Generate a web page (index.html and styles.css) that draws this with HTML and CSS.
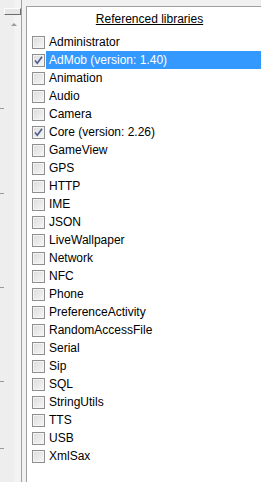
FILE: index.html
```html
<!DOCTYPE html>
<html lang="en">
<head>
    <meta charset="UTF-8">
    <meta name="viewport" content="width=device-width, initial-scale=1.0">
    <title>Referenced libraries</title>
    <link rel="stylesheet" href="styles.css">
</head>
<body>

    <div class="frame">
        <div class="rail">
            <div class="rail-button"></div>
            <div class="rail-arrow"></div>
            <div class="tick tick-1"></div>
            <div class="tick tick-2"></div>
            <div class="tick tick-3"></div>
            <div class="tick tick-4"></div>
            <div class="tick tick-5"></div>
        </div>
        <div class="gutter"></div>

        <div class="panel">
            <h1 class="panel-title">Referenced libraries</h1>

            <ul class="lib-list">
                <li class="lib"><span class="box"></span><span class="name">Administrator</span></li>
                <li class="lib selected">
                    <span class="box"><svg class="check" viewBox="0 0 11 11"><polyline points="2,5.5 4.3,8.2 9,1.8"/></svg></span>
                    <span class="name">AdMob (version: 1.40)</span>
                </li>
                <li class="lib"><span class="box"></span><span class="name">Animation</span></li>
                <li class="lib"><span class="box"></span><span class="name">Audio</span></li>
                <li class="lib"><span class="box"></span><span class="name">Camera</span></li>
                <li class="lib">
                    <span class="box"><svg class="check" viewBox="0 0 11 11"><polyline points="2,5.5 4.3,8.2 9,1.8"/></svg></span>
                    <span class="name">Core (version: 2.26)</span>
                </li>
                <li class="lib"><span class="box"></span><span class="name">GameView</span></li>
                <li class="lib"><span class="box"></span><span class="name">GPS</span></li>
                <li class="lib"><span class="box"></span><span class="name">HTTP</span></li>
                <li class="lib"><span class="box"></span><span class="name">IME</span></li>
                <li class="lib"><span class="box"></span><span class="name">JSON</span></li>
                <li class="lib"><span class="box"></span><span class="name">LiveWallpaper</span></li>
                <li class="lib"><span class="box"></span><span class="name">Network</span></li>
                <li class="lib"><span class="box"></span><span class="name">NFC</span></li>
                <li class="lib"><span class="box"></span><span class="name">Phone</span></li>
                <li class="lib"><span class="box"></span><span class="name">PreferenceActivity</span></li>
                <li class="lib"><span class="box"></span><span class="name">RandomAccessFile</span></li>
                <li class="lib"><span class="box"></span><span class="name">Serial</span></li>
                <li class="lib"><span class="box"></span><span class="name">Sip</span></li>
                <li class="lib"><span class="box"></span><span class="name">SQL</span></li>
                <li class="lib"><span class="box"></span><span class="name">StringUtils</span></li>
                <li class="lib"><span class="box"></span><span class="name">TTS</span></li>
                <li class="lib"><span class="box"></span><span class="name">USB</span></li>
                <li class="lib"><span class="box"></span><span class="name">XmlSax</span></li>
            </ul>
        </div>
    </div>

</body>
</html>
```

FILE: styles.css
```css
body {
    margin: 0;
    width: 261px;
    height: 482px;
    overflow: hidden;
    background-color: #f0f0f0;
    font-family: 'Liberation Sans', Arial, sans-serif;
    font-size: 12px;
    color: #000;
}

.frame {
    display: flex;
    height: 482px;
}

/* left strip, a scrollbar from the neighbouring pane */
.rail {
    width: 21px;
    flex-shrink: 0;
    background: linear-gradient(to right, #eeeeee 0, #eeeeee 14px, #f3f3f3 14px, #f3f3f3 21px);
    border-right: 1px solid #a0a0a0;
    display: flex;
    flex-direction: column;
}

.rail-button {
    margin: 8px 0 0 4px;
    height: 5px;
    border: 1px solid #fcfcfc;
    border-right-color: #6d6d6d;
    border-bottom-color: #6d6d6d;
    background-color: #e6e6e6;
}

.rail-arrow {
    margin: 8px 0 0 11px;
    width: 0;
    height: 0;
    border-left: 3px solid transparent;
    border-right: 3px solid transparent;
    border-bottom: 3px solid #9a9a9a;
}

.tick {
    width: 4px;
    height: 1px;
    background-color: #9a9a9a;
}

.tick-1 { margin-top: 82px; }
.tick-2 { margin-top: 84px; }
.tick-3 { margin-top: 93px; }
.tick-4 { margin-top: 93px; }
.tick-5 { margin-top: 66px; }

.gutter {
    width: 4px;
    flex-shrink: 0;
    background-color: #f0f0f0;
}

.panel {
    width: 245px;
    flex-shrink: 0;
    margin-top: 6px;
    background-color: #fff;
    border-top: 1px solid #a0a0a0;
    border-left: 1px solid #a0a0a0;
}

.panel-title {
    margin: 3px 0 5px 0;
    font-size: 12px;
    font-weight: normal;
    line-height: 18px;
    text-align: center;
    text-decoration: underline;
}

.lib-list {
    list-style: none;
    margin: 0;
    padding: 0;
}

.lib {
    display: flex;
    align-items: center;
    height: 18px;
}

.box {
    width: 11px;
    height: 11px;
    margin: 0 1px 0 5px;
    flex-shrink: 0;
    border: 1px solid #8f8f8f;
    background: linear-gradient(135deg, #dcdcdc, #f6f6f6);
    box-shadow: inset 0 0 0 1px #f4f4f4;
    display: flex;
}

.check {
    width: 11px;
    height: 11px;
}

.check polyline {
    fill: none;
    stroke: #4a5b8f;
    stroke-width: 1.6;
}

.name {
    flex: 1;
    height: 18px;
    line-height: 18px;
    padding-left: 3px;
    white-space: nowrap;
}

.selected .name {
    background-color: #3399ff;
    color: #fff;
}
```
